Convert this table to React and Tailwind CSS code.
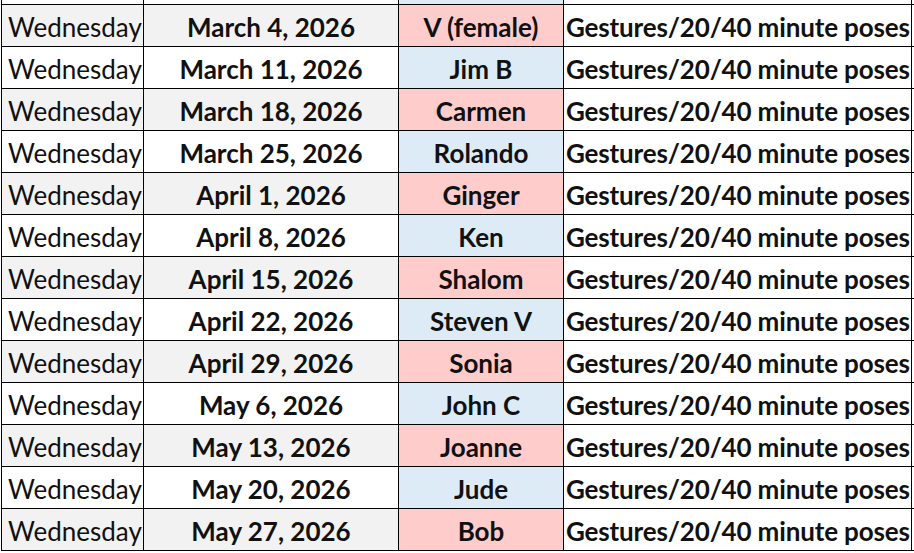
const rows = [
  { date: 'March 4, 2026', model: 'V (female)' },
  { date: 'March 11, 2026', model: 'Jim B' },
  { date: 'March 18, 2026', model: 'Carmen' },
  { date: 'March 25, 2026', model: 'Rolando' },
  { date: 'April 1, 2026', model: 'Ginger' },
  { date: 'April 8, 2026', model: 'Ken' },
  { date: 'April 15, 2026', model: 'Shalom' },
  { date: 'April 22, 2026', model: 'Steven V' },
  { date: 'April 29, 2026', model: 'Sonia' },
  { date: 'May 6, 2026', model: 'John C' },
  { date: 'May 13, 2026', model: 'Joanne' },
  { date: 'May 20, 2026', model: 'Jude' },
  { date: 'May 27, 2026', model: 'Bob' },
];

const Row = ({ date, model, index }) => {
  const shaded = index % 2 === 0;
  const dayBg = shaded ? 'bg-[#f2f2f2]' : 'bg-white';
  const modelBg = shaded ? 'bg-[#ffcccc]' : 'bg-[#ddebf7]';

  return (
    <div className="grid grid-cols-[143px_255px_165px_348px] h-[42px] border-b border-black">
      <div className={`${dayBg} border-l border-r border-black flex items-center pt-[3px] pl-[6px] text-[26px] text-[#111]`}>
        Wednesday
      </div>
      <div className={`${dayBg} border-r border-black flex items-center justify-center pt-[3px] text-[26px] font-bold text-[#111]`}>
        {date}
      </div>
      <div className={`${modelBg} border-r border-black flex items-center justify-center pt-[3px] text-[26px] font-bold text-[#111]`}>
        {model}
      </div>
      <div className="bg-white border-r border-black flex items-center pt-[3px] pl-[2px] text-[26px] tracking-[-0.15px] font-bold text-[#111] whitespace-nowrap">
        Gestures/20/40 minute poses
      </div>
    </div>
  );
};

const App = () => {
  return (
    <div className="w-[914px] h-[553px] bg-white overflow-hidden font-['Lato',sans-serif] leading-none">
      <div className="ml-[1px] w-[913px]">
        <div className="grid grid-cols-[143px_255px_165px_348px] h-[5px] border-b border-black">
          <div className="border-l border-r border-black bg-white" />
          <div className="border-r border-black bg-white" />
          <div className="border-r border-black bg-[#ddebf7]" />
          <div className="border-r border-black bg-white" />
        </div>
        {rows.map((r, i) => (
          <Row key={r.date} index={i} {...r} />
        ))}
      </div>
    </div>
  );
};

export default App;
